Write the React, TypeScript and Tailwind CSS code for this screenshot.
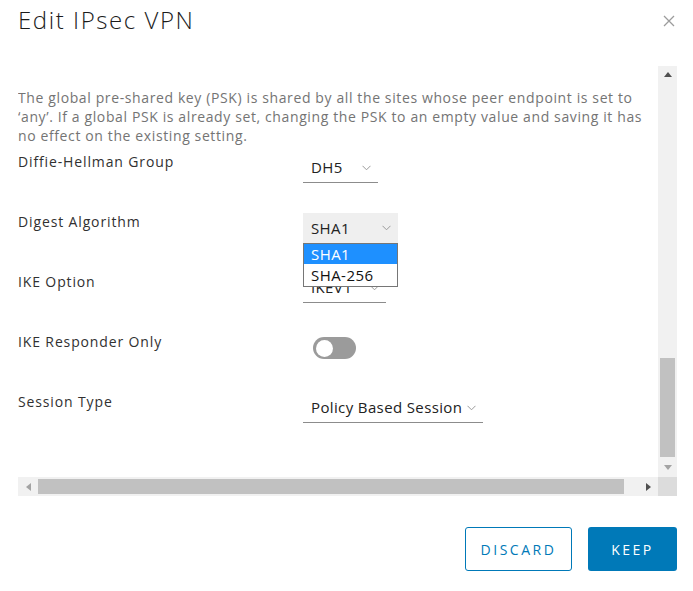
import React from 'react';

const Chevron: React.FC<{ className?: string }> = ({ className = '' }) => (
  <svg width="9" height="6" viewBox="0 0 9 6" className={className}>
    <path d="M0.5 0.8 L4.5 4.8 L8.5 0.8" fill="none" stroke="#9a9a9a" strokeWidth="1" />
  </svg>
);

interface SelectProps {
  value: string;
  width: string;
  boxed?: boolean;
}

const Select: React.FC<SelectProps> = ({ value, width, boxed = false }) => (
  <div
    className={`flex h-[30px] items-center justify-between pl-2 pr-[7px] ${width} ${
      boxed ? 'bg-[#efefef]' : 'border-b border-[#8c8c8c]'
    }`}
  >
    <span className="text-[15px] tracking-[0.025em] text-[#222]">{value}</span>
    <Chevron />
  </div>
);

const Row: React.FC<{ label: string; children: React.ReactNode }> = ({ label, children }) => (
  <div className="flex h-[60px] items-start">
    <div className="w-[285px] shrink-0 text-[14px] leading-[20px] tracking-[0.062em] text-[#313131]">
      {label}
    </div>
    <div className="relative pt-px">{children}</div>
  </div>
);

const Tri: React.FC<{ dir: 'up' | 'down' | 'left' | 'right'; color: string }> = ({ dir, color }) => {
  const pts = {
    up: '0,5 4,0 8,5',
    down: '0,0 8,0 4,5',
    left: '5,0 5,8 0,4',
    right: '0,0 0,8 5,4',
  }[dir];
  const vert = dir === 'up' || dir === 'down';
  return (
    <svg width={vert ? 8 : 5} height={vert ? 5 : 8} viewBox={vert ? '0 0 8 5' : '0 0 5 8'}>
      <polygon points={pts} fill={color} />
    </svg>
  );
};

export default function App() {
  return (
    <div className="h-[591px] w-[693px] bg-white font-['Open_Sans',sans-serif]">
      <div className="flex h-[66px] items-start justify-between pl-[18px] pr-[16px] pt-[4px]">
        <h1 className="text-[24px] font-light leading-[32px] tracking-[0.065em] text-[#1b1b1b]">
          Edit IPsec VPN
        </h1>
        <svg width="12" height="12" viewBox="0 0 12 12" className="mr-[2px] mt-[11px]">
          <path d="M1 1 L11 11 M11 1 L1 11" stroke="#9c9c9c" strokeWidth="1.3" />
        </svg>
      </div>

      <div className="ml-[18px] mr-[16px] flex h-[430px] flex-col">
        <div className="flex h-[411px]">
          <div className="relative flex-1 overflow-hidden pt-[22px]">
            <p className="text-[14px] leading-[19px] tracking-[0.044em] text-[#747474]">
              The global pre-shared key (PSK) is shared by all the sites whose peer endpoint is set to
              ‘any’. If a global PSK is already set, changing the PSK to an empty value and saving it has
              no effect on the existing setting.
            </p>
            <div className="mt-[7px]">
              <Row label="Diffie-Hellman Group">
                <Select value="DH5" width="w-[75px]" />
              </Row>
              <Row label="Digest Algorithm">
                <Select value="SHA1" width="w-[95px]" boxed />
                <div className="absolute left-0 top-[31px] z-10 w-[95px] border border-[#767676] bg-white text-[15px] leading-[20px] tracking-[0.03em] text-[#111]">
                  <div className="bg-[#1e90ff] pl-[7px] text-white">SHA1</div>
                  <div className="h-[22px] pl-[7px] leading-[22px]">SHA-256</div>
                </div>
              </Row>
              <Row label="IKE Option">
                <Select value="IKEV1" width="w-[83px]" />
              </Row>
              <Row label="IKE Responder Only">
                <div className="ml-[10px] mt-[4px] flex h-[22px] w-[43px] items-center rounded-full bg-[#9b9b9b] pl-[3px]">
                  <div className="h-[17px] w-[17px] rounded-full bg-white" />
                </div>
              </Row>
              <Row label="Session Type">
                <Select value="Policy Based Session" width="w-[180px]" />
              </Row>
            </div>
          </div>
          <div className="flex w-[19px] flex-col bg-[#f1f1f1]">
            <div className="flex h-[17px] items-center justify-center">
              <Tri dir="up" color="#505050" />
            </div>
            <div className="flex-1" />
            <div className="mx-[2px] h-[99px] bg-[#c1c1c1]" />
            <div className="flex h-[20px] items-center justify-center">
              <Tri dir="down" color="#a3a3a3" />
            </div>
          </div>
        </div>
        <div className="flex h-[19px]">
          <div className="flex flex-1 items-center bg-[#f1f1f1]">
            <div className="flex w-[20px] justify-center">
              <Tri dir="left" color="#a3a3a3" />
            </div>
            <div className="h-[15px] w-[586px] bg-[#c1c1c1]" />
            <div className="flex-1" />
            <div className="flex w-[19px] justify-center">
              <Tri dir="right" color="#505050" />
            </div>
          </div>
          <div className="w-[19px] bg-[#dcdcdc]" />
        </div>
      </div>

      <div className="mt-[31px] flex justify-end gap-[16px] pr-[16px]">
        <button className="h-[44px] w-[107px] rounded-[3px] border border-[#0079b8] bg-white text-[14px] tracking-[0.18em] text-[#0079b8]">
          DISCARD
        </button>
        <button className="h-[44px] w-[89px] rounded-[3px] bg-[#0079b8] text-[14px] tracking-[0.18em] text-white">
          KEEP
        </button>
      </div>
    </div>
  );
}
